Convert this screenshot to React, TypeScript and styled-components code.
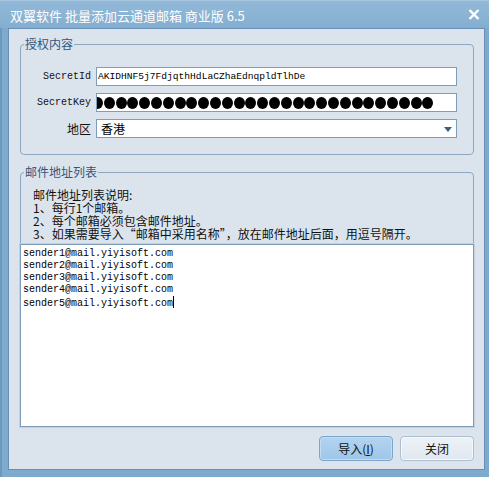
import React from 'react';
import styled, { createGlobalStyle } from 'styled-components';

const GlobalStyle = createGlobalStyle`
  html, body {
    margin: 0;
    padding: 0;
    overflow: hidden;
    background: #7aa6c9;
  }
`;

const CJK = `"Noto Sans CJK SC", "Noto Sans", sans-serif`;
const MONO = `"Liberation Mono", "Noto Sans CJK SC", monospace`;

const Window = styled.div`
  width: 489px;
  height: 477px;
  box-sizing: border-box;
  display: flex;
  flex-direction: column;
  background: linear-gradient(to right, #6b98bf 0, #6b98bf 2px, #7eaacd 2px);
`;

const TitleBar = styled.div`
  height: 28px;
  flex: none;
  display: flex;
  align-items: center;
  justify-content: space-between;
  padding: 0 9px 0 10px;
  background: linear-gradient(#92b9d8, #84aed0);
  border-top: 1px solid #a6c6e0;
  box-sizing: border-box;
`;

const Title = styled.div`
  font-family: ${CJK};
  font-size: 13px;
  color: #ffffff;
  line-height: 16px;
  padding-top: 2px;
  white-space: nowrap;
`;

const Body = styled.div`
  flex: 1;
  margin: 0 4px 7px 8px;
  border: 1px solid #6890b6;
  background: #dbe4ed;
  padding: 7px 10px 0 11px;
  display: flex;
  flex-direction: column;
`;

const Group = styled.fieldset<{ $top?: number }>`
  margin: ${(p) => p.$top ?? 0}px 0 0 0;
  border: 1px solid #8ea7c0;
  border-radius: 4px;
  min-width: 0;
`;

const Legend = styled.legend`
  font-family: ${CJK};
  font-size: 12px;
  line-height: 16px;
  color: #34557a;
  padding: 0 1px;
  margin-left: 3px;
`;

const AuthGroup = styled(Group)`
  padding: 15px 15px 16px 0;
`;

const FormGrid = styled.div`
  display: grid;
  grid-template-columns: 70px 361px;
  column-gap: 5px;
  row-gap: 7px;
  align-items: center;
`;

const FieldLabel = styled.label<{ $cjk?: boolean }>`
  justify-self: end;
  font-family: ${(p) => (p.$cjk ? CJK : MONO)};
  font-size: ${(p) => (p.$cjk ? 12 : 10)}px;
  color: #111;
  white-space: nowrap;
`;

const Field = styled.div`
  height: 19px;
  box-sizing: border-box;
  border: 1px solid #7f9db9;
  background: #fff;
  display: flex;
  align-items: center;
  overflow: hidden;
  position: relative;
  padding-left: 1px;
`;

const FieldText = styled.span<{ $cjk?: boolean }>`
  font-family: ${(p) => (p.$cjk ? CJK : MONO)};
  font-size: ${(p) => (p.$cjk ? 12 : 9.6)}px;
  color: #000;
  white-space: nowrap;
  padding-left: ${(p) => (p.$cjk ? 3 : 0)}px;
`;

const Dots = styled.div`
  display: flex;
  gap: 0.8px;
  margin-left: -6px;
`;

const Dot = styled.span`
  width: 11px;
  height: 12px;
  border-radius: 50%;
  background: #000;
  flex: none;
`;

const Arrow = styled.svg`
  position: absolute;
  right: 4px;
  top: 7px;
`;

const ListGroup = styled(Group)`
  padding: 0;
  display: flex;
  flex-direction: column;
`;

const Notes = styled.div`
  font-family: ${CJK};
  font-size: 12px;
  line-height: 13px;
  color: #111;
  padding: 8px 0 0 12px;
  white-space: nowrap;
`;

const AddressBox = styled.div`
  margin: 4px -1px -1px -1px;
  height: 183px;
  box-sizing: border-box;
  border: 1px solid #7f9db9;
  box-shadow: 0 0 0 1px #c3d1de;
  background: #fff;
  padding: 3px 2px;
  font-family: ${MONO};
  font-size: 10px;
  line-height: 12px;
  color: #000;
`;

const Caret = styled.span`
  display: inline-block;
  width: 1px;
  height: 12px;
  background: #000;
  vertical-align: -2px;
`;

const ButtonRow = styled.div`
  display: flex;
  justify-content: flex-end;
  gap: 7px;
  margin-top: 9px;
`;

const Button = styled.button<{ $primary?: boolean }>`
  width: 74px;
  height: 25px;
  border-radius: 4px;
  border: 1px solid ${(p) => (p.$primary ? '#7ea6cb' : '#aebfd0')};
  background: ${(p) =>
    p.$primary
      ? 'linear-gradient(#b2d4f0, #9fc6e7)'
      : 'linear-gradient(#edf2f6, #dfe7ef)'};
  box-shadow: inset 0 0 0 1px ${(p) => (p.$primary ? '#c2dcf2' : '#f5f8fb')};
  font-family: ${CJK};
  font-size: 12px;
  color: #111;
  padding: 0;
  cursor: pointer;
`;

const emails = [
  'sender1@mail.yiyisoft.com',
  'sender2@mail.yiyisoft.com',
  'sender3@mail.yiyisoft.com',
  'sender4@mail.yiyisoft.com',
  'sender5@mail.yiyisoft.com',
];

const notes = [
  '邮件地址列表说明:',
  '1、每行1个邮箱。',
  '2、每个邮箱必须包含邮件地址。',
  '3、如果需要导入“邮箱中采用名称”，放在邮件地址后面，用逗号隔开。',
];

const App: React.FC = () => (
  <>
    <GlobalStyle />
    <Window>
      <TitleBar>
        <Title>双翼软件 批量添加云通道邮箱 商业版 6.5</Title>
        <svg width="12" height="11" viewBox="0 0 12 11">
          <path d="M1.5 1 L10.5 10 M10.5 1 L1.5 10" stroke="#fff" strokeWidth="2.4" />
        </svg>
      </TitleBar>
      <Body>
        <AuthGroup>
          <Legend>授权内容</Legend>
          <FormGrid>
            <FieldLabel>SecretId</FieldLabel>
            <Field>
              <FieldText>AKIDHNF5j7FdjqthHdLaCZhaEdnqpldTlhDe</FieldText>
            </Field>
            <FieldLabel>SecretKey</FieldLabel>
            <Field>
              <Dots>
                {Array.from({ length: 29 }).map((_, i) => (
                  <Dot key={i} />
                ))}
              </Dots>
            </Field>
            <FieldLabel $cjk>地区</FieldLabel>
            <Field>
              <FieldText $cjk>香港</FieldText>
              <Arrow width="8" height="5" viewBox="0 0 8 5">
                <path d="M0 0 H8 L4 5 Z" fill="#3d5f82" />
              </Arrow>
            </Field>
          </FormGrid>
        </AuthGroup>
        <ListGroup $top={9}>
          <Legend>邮件地址列表</Legend>
          <Notes>
            {notes.map((n) => (
              <div key={n}>{n}</div>
            ))}
          </Notes>
          <AddressBox>
            {emails.map((e, i) => (
              <div key={e}>
                {e}
                {i === emails.length - 1 && <Caret />}
              </div>
            ))}
          </AddressBox>
        </ListGroup>
        <ButtonRow>
          <Button $primary>
            导入(<u>I</u>)
          </Button>
          <Button>关闭</Button>
        </ButtonRow>
      </Body>
    </Window>
  </>
);

export default App;
